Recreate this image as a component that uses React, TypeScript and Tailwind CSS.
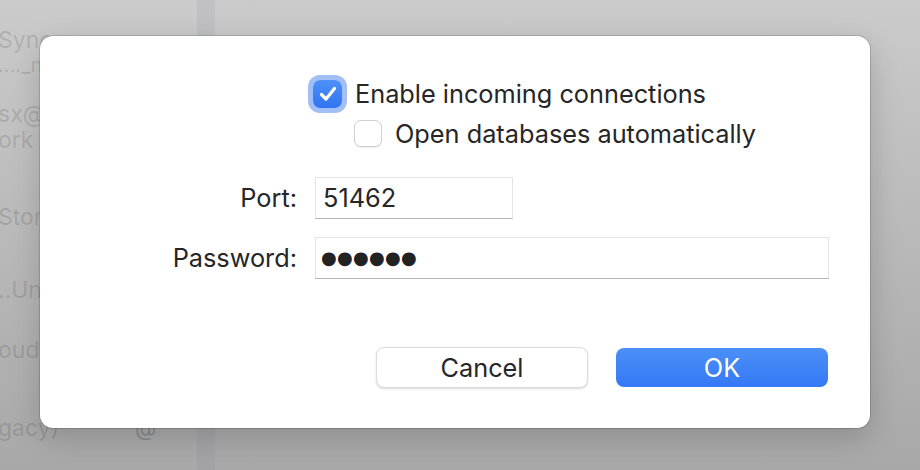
import React from "react";

function CheckMark() {
  return (
    <svg width="18" height="16" viewBox="0 0 18 16" fill="none">
      <path d="M2.5 8.5 L7 13 L15.5 2.5" stroke="white" strokeWidth="3.2" strokeLinecap="round" strokeLinejoin="round" />
    </svg>
  );
}

export default function App() {
  const sideText = "h-[24px] text-[23px] leading-[24px] text-black/[0.13] whitespace-nowrap";
  const t = "text-[25.3px] leading-none";
  return (
    <div
      className="relative w-[920px] h-[470px] overflow-hidden bg-gradient-to-b from-[#cbcbcb] to-[#a8a8a8]"
      style={{ fontFamily: "Inter, 'Noto Sans', sans-serif" }}
    >
      <div className="flex h-full">
        <div className="w-[199px] h-full flex flex-col pt-[28px] overflow-hidden -ml-[2px]">
          <div className={sideText}>Sync</div>
          <div className="mt-[3px] h-[20px] text-[20px] leading-[20px] text-black/[0.13] whitespace-nowrap">…._n</div>
          <div className={`${sideText} mt-[27px]`}>sx@</div>
          <div className={`${sideText} mt-[2px]`}>ork (</div>
          <div className={`${sideText} mt-[53px]`}>Stor</div>
          <div className={`${sideText} mt-[49px]`}>..Un</div>
          <div className={`${sideText} mt-[36px]`}>oud</div>
          <div className="mt-[54px] flex items-center">
            <span className={sideText}>gacy)</span>
            <span className="ml-[76px] text-[22px] leading-none text-black/[0.2]">@</span>
          </div>
        </div>
        <div className="w-[18px] h-full bg-gradient-to-b from-[#c0c1c5] to-[#a2a3a7]" />
        <div className="flex-1" />
      </div>

      <div className="absolute left-[40px] top-[36px] w-[830px] h-[392px] bg-white rounded-[13px] shadow-[0_0_0_1px_rgba(0,0,0,0.14),0_10px_30px_rgba(0,0,0,0.18)] text-[#262626]">
        <div className="pt-[44px] pl-[273px] flex items-center gap-[13px]">
          <div className="w-[29px] h-[28px] rounded-[7px] bg-gradient-to-b from-[#4f91f8] to-[#2f74f0] flex items-center justify-center shadow-[0_0_0_5px_rgba(70,125,240,0.5)]">
            <CheckMark />
          </div>
          <span className={t}>Enable incoming connections</span>
        </div>
        <div className="mt-[12px] pl-[314px] flex items-center gap-[13px]">
          <div className="w-[28px] h-[27px] rounded-[7px] bg-white border border-[#cfcfcf] shadow-[0_1px_1px_rgba(0,0,0,0.08)]" />
          <span className={t}>Open databases automatically</span>
        </div>

        <div className="mt-[30px] flex items-center">
          <div className={`w-[257px] text-right ${t}`}>Port:</div>
          <div className={`ml-[18px] w-[198px] h-[42px] bg-white border border-[#e4e4e4] border-b-[#b5b5b5] flex items-center pl-[7px] ${t}`}>
            51462
          </div>
        </div>
        <div className="mt-[18px] flex items-center">
          <div className={`w-[257px] text-right ${t}`}>Password:</div>
          <div className="ml-[18px] w-[514px] h-[42px] bg-white border border-[#e4e4e4] border-b-[#b5b5b5] flex items-center pl-[5px]">
            <span className="text-[18px] leading-none tracking-[0.3px] text-[#222]" style={{ fontFamily: "'DejaVu Sans', sans-serif" }}>
              ●●●●●●
            </span>
          </div>
        </div>

        <div className="mt-[68px] pl-[336px] flex items-center gap-[28px]">
          <button className={`w-[212px] h-[41px] rounded-[8px] bg-white border border-[#dcdcdc] shadow-[0_1px_2px_rgba(0,0,0,0.15)] text-[#262626] ${t}`}>
            Cancel
          </button>
          <button className={`w-[212px] h-[39px] rounded-[8px] bg-gradient-to-b from-[#4b8ff7] to-[#3479f5] text-white ${t}`}>
            OK
          </button>
        </div>
      </div>
    </div>
  );
}
